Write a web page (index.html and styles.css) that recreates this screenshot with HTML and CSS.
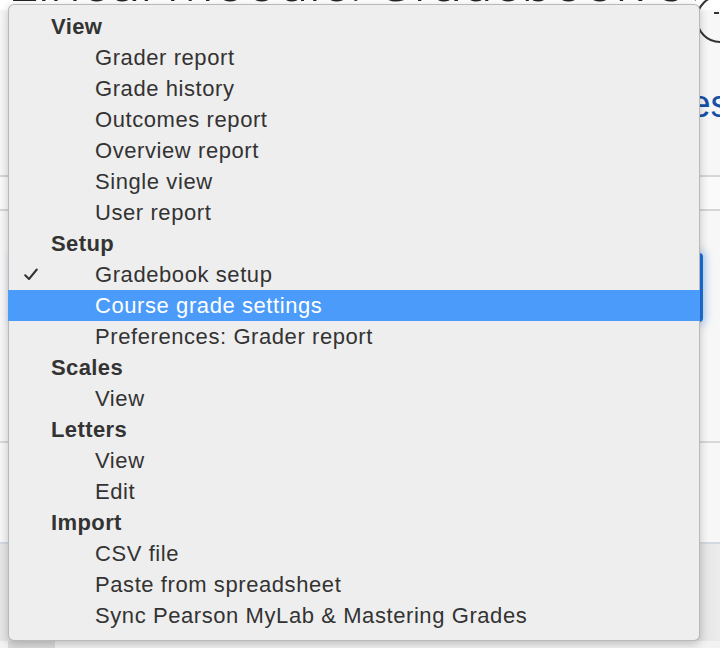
FILE: index.html
```html
<!DOCTYPE html>
<html>
<head>
<meta charset="utf-8">
<link rel="stylesheet" href="styles.css">
</head>
<body>
<div class="page">
  <div class="title-row">
    <h1 class="title">Lineal Moodle: Gradebook setup (</h1>
    <span class="help-circle"><span class="help-dash"></span></span>
  </div>
  <div class="nav-row"><a class="nav-link">Grades</a></div>
  <div class="tabs-bar"></div>
  <div class="select-field"></div>
  <div class="divider"></div>
  <div class="footer"></div>
  <div class="bottom-strip"><span class="bottom-block"></span></div>
</div>

<div class="menu">
  <div class="row heading"><span class="mark"></span>View</div>
  <div class="row item"><span class="mark"></span>Grader report</div>
  <div class="row item"><span class="mark"></span>Grade history</div>
  <div class="row item"><span class="mark"></span>Outcomes report</div>
  <div class="row item"><span class="mark"></span>Overview report</div>
  <div class="row item"><span class="mark"></span>Single view</div>
  <div class="row item"><span class="mark"></span>User report</div>
  <div class="row heading"><span class="mark"></span>Setup</div>
  <div class="row item"><span class="mark"><svg class="check" width="14" height="13" viewBox="0 0 14 13"><path d="M1.2 7.2 L5 11 L12.8 1.5" fill="none" stroke="#333" stroke-width="2" stroke-linecap="round" stroke-linejoin="round"/></svg></span>Gradebook setup</div>
  <div class="row item selected"><span class="mark"></span>Course grade settings</div>
  <div class="row item"><span class="mark"></span>Preferences: Grader report</div>
  <div class="row heading"><span class="mark"></span>Scales</div>
  <div class="row item"><span class="mark"></span>View</div>
  <div class="row heading"><span class="mark"></span>Letters</div>
  <div class="row item"><span class="mark"></span>View</div>
  <div class="row item"><span class="mark"></span>Edit</div>
  <div class="row heading"><span class="mark"></span>Import</div>
  <div class="row item"><span class="mark"></span>CSV file</div>
  <div class="row item"><span class="mark"></span>Paste from spreadsheet</div>
  <div class="row item"><span class="mark"></span>Sync Pearson MyLab &amp; Mastering Grades</div>
</div>
</body>
</html>
```

FILE: styles.css
```css
html, body {
  margin: 0;
  padding: 0;
}
body {
  width: 720px;
  height: 648px;
  overflow: hidden;
  position: relative;
  background: #f7f7f7;
  font-family: "Liberation Sans", Arial, sans-serif;
}
.page {
  display: flex;
  flex-direction: column;
}
.title-row {
  display: flex;
  align-items: flex-start;
  height: 56px;
  margin-top: -46px;
  background: #ffffff;
}
.title {
  margin: 0 0 0 8px;
  font-family: "Roboto", sans-serif;
  font-weight: 300;
  font-size: 56px;
  line-height: 56px;
  color: #222;
  white-space: nowrap;
  flex: 1;
  min-width: 0;
  overflow: hidden;
  height: 56px;
}
.help-circle {
  flex: none;
  width: 44px;
  height: 44px;
  margin-top: 41px;
  margin-right: -24px;
  border: 2px solid #333;
  border-radius: 50%;
  position: relative;
}
.help-dash {
  position: absolute;
  left: 16px;
  top: 15px;
  width: 5px;
  height: 2px;
  background: #333;
}
.nav-row {
  margin-top: 72px;
  height: 44px;
  padding-left: 605px;
  white-space: nowrap;
}
.nav-link {
  font-size: 38px;
  line-height: 44px;
  color: #1650a8;
}
.tabs-bar {
  margin-top: 49px;
  height: 32px;
  border-top: 2px solid #d6d6d6;
  border-bottom: 2px solid #d6d6d6;
  background: #fafafa;
}
.select-field {
  margin-top: 42px;
  margin-left: 14px;
  width: 689px;
  height: 69px;
  box-sizing: border-box;
  border: 3px solid #1b6fd9;
  border-radius: 4px;
  background: #fff;
  box-shadow: 0 0 8px 3px rgba(60, 140, 235, 0.35);
}
.divider {
  margin-top: 119px;
  height: 2px;
  background: #d8d8d8;
}
.footer {
  margin-top: 99px;
  height: 97px;
  border-top: 2px solid #d3d9e0;
  background: linear-gradient(to right, #e6e6e6 0%, #e3e3e3 97%, #ececec 100%);
}
.bottom-strip {
  height: 20px;
  background: #f2f2f2;
  display: flex;
}
.bottom-block {
  margin-left: 8px;
  width: 47px;
  background: #dcdcdc;
}

.menu {
  position: absolute;
  left: 8px;
  top: 4px;
  width: 692px;
  box-sizing: border-box;
  padding: 6px 0 9px;
  background: #eeeeee;
  border: 1px solid rgba(0, 0, 0, 0.22);
  border-radius: 6px;
  box-shadow: 0 3px 10px rgba(0, 0, 0, 0.22);
  color: #333333;
  font-size: 22px;
  letter-spacing: 0.58px;
}
.row {
  display: flex;
  align-items: center;
  height: 31px;
  line-height: 31px;
  padding-left: 14px;
  white-space: nowrap;
}
.heading {
  font-weight: bold;
  letter-spacing: 0.4px;
}
.heading .mark {
  width: 28px;
}
.item .mark {
  width: 72px;
}
.mark {
  flex: none;
  display: flex;
  align-items: center;
  height: 31px;
}
.check {
  display: block;
  margin-left: 1px;
}
.selected {
  background: #4a9bfa;
  color: #ffffff;
  margin: 0 -1px;
  padding-left: 15px;
}
```
